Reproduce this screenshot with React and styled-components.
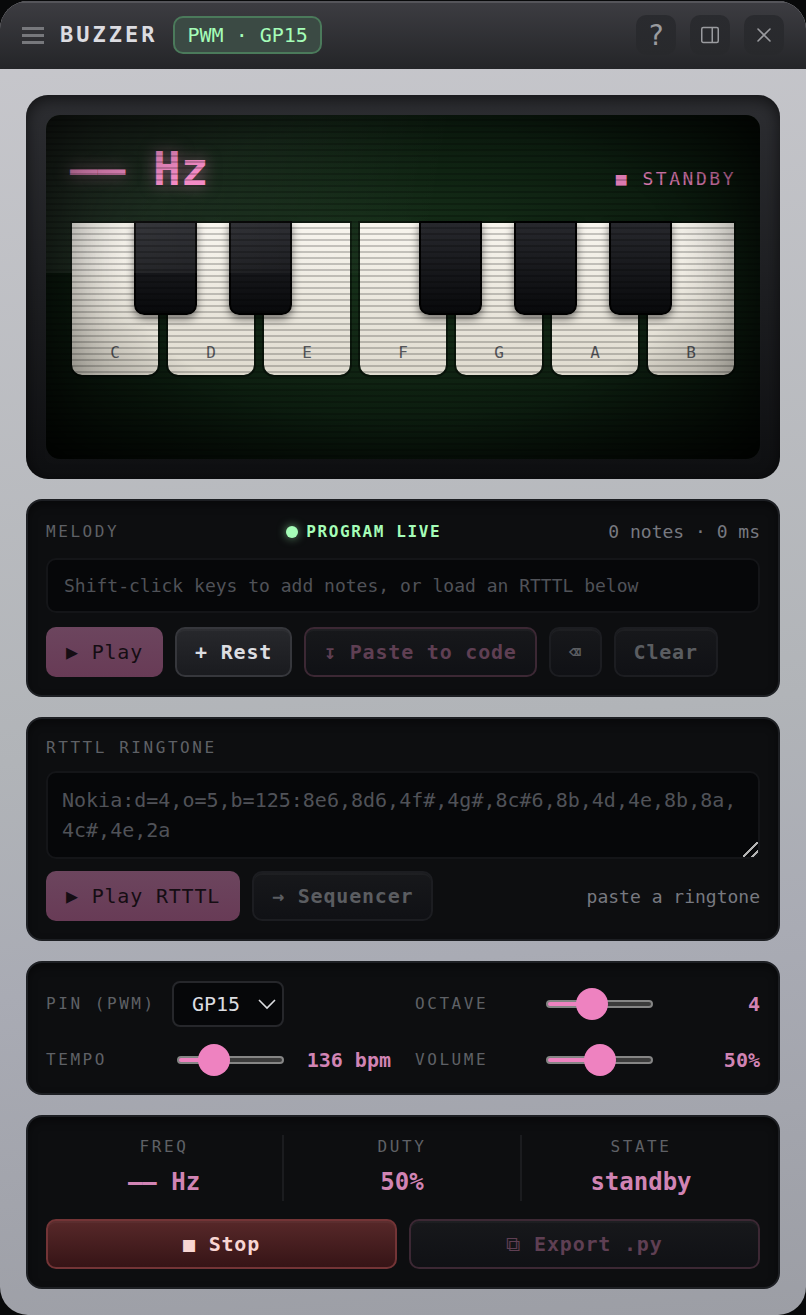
import { useState } from "react";
import styled, { createGlobalStyle, css } from "styled-components";

const mono = `"DejaVu Sans Mono", "Liberation Mono", monospace`;

const GlobalStyle = createGlobalStyle`
  * {
    box-sizing: border-box;
  }

  body {
    margin: 0;
    font-family: ${mono};
  }

  button,
  select,
  textarea,
  input {
    font-family: inherit;
    margin: 0;
  }
`;

const Page = styled.div`
  padding-top: 1px;
  background: #08090a;
`;

const Window = styled.div`
  border-radius: 28px;
  overflow: hidden;
  background: linear-gradient(175deg, #c8c8cd, #b1b4b8 55%, #a9abb4 72%, #9c9ea5);
`;

const Header = styled.header`
  display: flex;
  align-items: center;
  gap: 16px;
  padding: 14px 22px;
  background: linear-gradient(#3d3d42, #242528);
  box-shadow: inset 0 2px 0 #55555a;
`;

const MenuIcon = styled.span`
  display: flex;
  flex-direction: column;
  gap: 4px;
  width: 22px;

  i {
    height: 3px;
    background: #77787c;
  }
`;

const Title = styled.h1`
  margin: 0;
  font-size: 22px;
  line-height: 30px;
  letter-spacing: 3px;
  color: #dcdce1;
`;

const Chip = styled.span`
  padding: 0 12px;
  border: 2px solid #4b7a5b;
  border-radius: 10px;
  background: #3b4a44;
  font-size: 20px;
  line-height: 34px;
  color: #a5fdb8;
`;

const HeaderActions = styled.div`
  display: flex;
  gap: 14px;
  margin-left: auto;
`;

const IconButton = styled.button`
  display: grid;
  place-items: center;
  width: 40px;
  height: 40px;
  padding: 0;
  border: 0;
  border-radius: 10px;
  background: linear-gradient(#2a2b2f, #28292c);
  font-size: 28px;
  color: #9a9b9f;
`;

const Body = styled.main`
  display: flex;
  flex-direction: column;
  gap: 20px;
  padding: 26px;
`;

const Bezel = styled.section`
  padding: 20px;
  border-radius: 22px;
  background: linear-gradient(#2d2e32, #0e0f11);
  box-shadow: inset 0 4px 16px rgba(0, 0, 0, 0.6);
`;

const Screen = styled.div`
  position: relative;
  min-height: 344px;
  padding: 24px;
  border-radius: 14px;
  overflow: hidden;
  background: radial-gradient(ellipse at 50% 45%, #17321a, #0c1c0f 60%, #050a05);

  &::before {
    content: "";
    position: absolute;
    inset: 0 40% 54% 0;
    z-index: 2;
    background: linear-gradient(100deg, rgba(255, 255, 255, 0.09), transparent 90%);
    pointer-events: none;
  }

  &::after {
    content: "";
    position: absolute;
    inset: 0;
    z-index: 2;
    border-radius: 14px;
    background:
      repeating-linear-gradient(transparent 0 4px, rgba(0, 0, 0, 0.2) 4px 6px),
      radial-gradient(ellipse at 50% 45%, transparent 55%, rgba(0, 0, 0, 0.55));
    box-shadow: inset 0 0 60px rgba(0, 0, 0, 0.6);
    pointer-events: none;
  }
`;

const Readout = styled.div`
  display: flex;
  align-items: baseline;
  justify-content: space-between;
  margin-bottom: 22px;
  color: #f486c4;
`;

const Frequency = styled.span`
  font-size: 46px;
  font-weight: 700;
  line-height: 60px;
  text-shadow: 0 0 16px rgba(244, 134, 196, 0.5);
`;

const ScreenState = styled.span`
  font-size: 18px;
  letter-spacing: 0.14em;
  opacity: 0.9;
`;

const Keyboard = styled.div`
  position: relative;
  display: grid;
  grid-template-columns: repeat(7, 1fr);
  gap: 6px;
`;

const WhiteKey = styled.button`
  display: flex;
  align-items: flex-end;
  justify-content: center;
  height: 156px;
  padding: 0 0 10px;
  border: 2px solid rgba(0, 0, 0, 0.4);
  border-radius: 0 0 12px 12px;
  background: linear-gradient(#f8f5ee, #dfdbcf) padding-box;
  font-size: 16px;
  line-height: 24px;
  color: #55575c;
`;

const BlackKey = styled.button`
  position: absolute;
  top: 0;
  left: calc(100% / 7 * ${(props) => props.$after} - 9.5% / 2);
  z-index: 1;
  width: 9.5%;
  height: 60%;
  padding: 0;
  border: 2px solid #000;
  border-radius: 0 0 10px 10px;
  background: linear-gradient(#27282d, #08090b);
  box-shadow: 0 4px 8px rgba(0, 0, 0, 0.5);
`;

const Panel = styled.section`
  display: flex;
  flex-direction: column;
  gap: ${(props) => props.$gap || 12}px;
  padding: 18px;
  border: 2px solid #1d1f23;
  border-radius: 16px;
  background: #0d0e10;
  box-shadow: inset 0 4px 8px rgba(0, 0, 0, 0.4);
`;

const PanelHead = styled.div`
  display: flex;
  align-items: center;
  justify-content: space-between;
  line-height: 25px;
`;

const labelText = css`
  margin: 0;
  font-size: 16px;
  font-weight: 400;
  line-height: 22px;
  letter-spacing: 0.16em;
  color: #5f6166;
`;

const PanelTitle = styled.h2`
  ${labelText}
`;

const Label = styled.label`
  ${labelText}
`;

const Live = styled.span`
  display: flex;
  align-items: center;
  gap: 8px;
  font-size: 16px;
  font-weight: 700;
  letter-spacing: 0.1em;
  color: #a5fdb8;

  &::before {
    content: "";
    width: 12px;
    height: 12px;
    border-radius: 50%;
    background: currentColor;
    box-shadow: 0 0 10px rgba(165, 253, 184, 0.6);
  }
`;

const Meta = styled.span`
  margin-left: ${(props) => (props.$push ? "auto" : "0")};
  font-size: 18px;
  color: #777980;
`;

const Lane = styled.div`
  padding: 12px 16px;
  border: 2px solid #141518;
  border-radius: 10px;
  background: #060709;
  font-size: 18px;
  line-height: 27px;
  color: #505258;
`;

const ButtonRow = styled.div`
  display: flex;
  flex-wrap: wrap;
  align-items: center;
  gap: 12px;
`;

const looks = {
  plain: css`
    border-color: #36373c;
    background: linear-gradient(#27282c, #1a1b1f);
    color: #dcdde1;
  `,
  muted: css`
    border-color: #1c1d21;
    background: linear-gradient(#17181b, #101115);
    color: #5b5d61;
  `,
  primary: css`
    border-color: transparent;
    background: linear-gradient(#6c455e, #683b56) border-box;
    box-shadow: none;
    color: #150d13;
    font-weight: 400;
  `,
  outline: css`
    border-color: #3c2834;
    background: linear-gradient(#17181b, #101115);
    color: #5f3f53;
  `,
  danger: css`
    border-color: #733436;
    background: linear-gradient(#572829, #361416);
    color: #f8d6d3;
  `,
};

const Button = styled.button`
  display: flex;
  align-items: center;
  justify-content: center;
  height: 50px;
  padding: 0 18px;
  border: 2px solid;
  border-radius: 10px;
  box-shadow: inset 0 2px 0 rgba(255, 255, 255, 0.03);
  font-size: 20px;
  font-weight: 700;
  letter-spacing: 0.04em;
  white-space: pre;
  flex: ${(props) => (props.$grow ? "1 1 0" : "none")};
  ${(props) => looks[props.$look]}
`;

const Glyph = styled.span`
  font-weight: 400;
`;

const Ringtone = styled.textarea`
  display: block;
  width: 100%;
  height: 88px;
  padding: 12px 14px;
  border: 2px solid #141518;
  border-radius: 10px;
  background: #060709;
  font-size: 20px;
  line-height: 30px;
  color: #dcdde1;
  resize: vertical;

  &::placeholder {
    color: #505258;
  }

  &::-webkit-resizer {
    background: linear-gradient(
      135deg,
      transparent 46%,
      #b4b4b4 46% 54%,
      transparent 54% 76%,
      #b4b4b4 76% 84%,
      transparent 84%
    );
  }
`;

const Settings = styled.div`
  display: grid;
  grid-template-columns: 1fr 1fr;
  gap: 18px 24px;
`;

const Field = styled.div`
  display: grid;
  grid-template-columns: 114px minmax(0, 1fr) 95px;
  align-items: center;
  gap: 12px;
  min-height: 30px;
`;

const SelectBox = styled.div`
  display: grid;
  align-items: center;

  > * {
    grid-area: 1 / 1;
  }

  svg {
    justify-self: end;
    margin-right: 8px;
    pointer-events: none;
  }
`;

const Select = styled.select`
  appearance: none;
  height: 46px;
  padding: 0 16px 0 18px;
  border: 2px solid #26272b;
  border-radius: 8px;
  background: #060709;
  font-size: 20px;
  color: #dcdde1;
`;

const Range = styled.input`
  appearance: none;
  height: 30px;
  margin-left: 5px;
  background: none;

  &::-webkit-slider-runnable-track {
    height: 8px;
    border: 2px solid #858585;
    border-radius: 4px;
    background: linear-gradient(
      90deg,
      #ee82c0 ${(props) => props.$fill}%,
      #3b3b3b ${(props) => props.$fill}%
    );
  }

  &::-webkit-slider-thumb {
    appearance: none;
    width: 32px;
    height: 32px;
    margin-top: -14px;
    border-radius: 50%;
    background: #ee82c0;
  }
`;

const Value = styled.output`
  font-size: ${(props) => (props.$large ? 24 : 20)}px;
  font-weight: 700;
  line-height: ${(props) => (props.$large ? 32 : 30)}px;
  text-align: ${(props) => (props.$large ? "center" : "right")};
  white-space: nowrap;
  color: #d184b4;
`;

const Stats = styled.div`
  display: grid;
  grid-template-columns: repeat(3, 1fr);
  margin-bottom: 6px;
`;

const Stat = styled.div`
  display: flex;
  flex-direction: column;
  align-items: center;
  gap: 8px;
  padding: 1px 0 3px;

  &:not(:last-child) {
    border-right: 2px solid #1b1c1f;
  }
`;

const whiteKeys = ["C", "D", "E", "F", "G", "A", "B"];
const blackKeys = [
  { name: "C sharp", after: 1 },
  { name: "D sharp", after: 2 },
  { name: "F sharp", after: 4 },
  { name: "G sharp", after: 5 },
  { name: "A sharp", after: 6 },
];

const SliderField = ({ id, label, min, max, value, unit = "", onChange }) => (
  <Field>
    <Label htmlFor={id}>{label}</Label>
    <Range
      id={id}
      type="range"
      min={min}
      max={max}
      value={value}
      $fill={((value - min) / (max - min)) * 100}
      onChange={(e) => onChange(Number(e.target.value))}
    />
    <Value htmlFor={id}>
      {value}
      {unit}
    </Value>
  </Field>
);

const App = () => {
  const [pin, setPin] = useState("GP15");
  const [tempo, setTempo] = useState(136);
  const [octave, setOctave] = useState(4);
  const [volume, setVolume] = useState(50);

  return (
    <Page>
      <GlobalStyle />
      <Window>
        <Header>
          <MenuIcon>
            <i />
            <i />
            <i />
          </MenuIcon>
          <Title>BUZZER</Title>
          <Chip>PWM · {pin}</Chip>
          <HeaderActions>
            <IconButton>?</IconButton>
            <IconButton aria-label="Dock">
              <svg width="20" height="20" fill="none" stroke="currentColor" strokeWidth="1.5">
                <rect x="1.75" y="2.5" width="16.5" height="15" rx="1.5" />
                <path d="M12.25 2.5v15" />
              </svg>
            </IconButton>
            <IconButton aria-label="Close">
              <svg width="20" height="20" fill="none" stroke="currentColor" strokeWidth="1.6">
                <path d="M4 4l12 12M16 4L4 16" strokeLinecap="round" />
              </svg>
            </IconButton>
          </HeaderActions>
        </Header>
        <Body>
          <Bezel>
            <Screen>
              <Readout>
                <Frequency>—— Hz</Frequency>
                <ScreenState>■ STANDBY</ScreenState>
              </Readout>
              <Keyboard>
                {whiteKeys.map((note) => (
                  <WhiteKey key={note}>{note}</WhiteKey>
                ))}
                {blackKeys.map(({ name, after }) => (
                  <BlackKey key={name} aria-label={name} $after={after} />
                ))}
              </Keyboard>
            </Screen>
          </Bezel>

          <Panel $gap={14}>
            <PanelHead>
              <PanelTitle>MELODY</PanelTitle>
              <Live>PROGRAM LIVE</Live>
              <Meta>0 notes · 0 ms</Meta>
            </PanelHead>
            <Lane>Shift-click keys to add notes, or load an RTTTL below</Lane>
            <ButtonRow>
              <Button $look="primary" disabled>▶ Play</Button>
              <Button $look="plain">+ Rest</Button>
              <Button $look="outline" disabled>↧ Paste to code</Button>
              <Button $look="muted" disabled>⌫</Button>
              <Button $look="muted" disabled>Clear</Button>
            </ButtonRow>
          </Panel>

          <Panel>
            <Label htmlFor="rtttl">RTTTL RINGTONE</Label>
            <Ringtone
              id="rtttl"
              placeholder="Nokia:d=4,o=5,b=125:8e6,8d6,4f#,4g#,8c#6,8b,4d,4e,8b,8a,4c#,4e,2a"
            />
            <ButtonRow>
              <Button $look="primary" disabled>▶ Play RTTTL</Button>
              <Button $look="muted" disabled>→ Sequencer</Button>
              <Meta $push>paste a ringtone</Meta>
            </ButtonRow>
          </Panel>

          <Panel>
            <Settings>
              <Field>
                <Label htmlFor="pin">PIN (PWM)</Label>
                <SelectBox>
                  <Select id="pin" value={pin} onChange={(e) => setPin(e.target.value)}>
                    <option>GP14</option>
                    <option>GP15</option>
                    <option>GP16</option>
                  </Select>
                  <svg width="18" height="12" fill="none" stroke="#dcdde1" strokeWidth="1.6">
                    <path d="M1 2l8 8 8-8" />
                  </svg>
                </SelectBox>
              </Field>
              <SliderField id="octave" label="OCTAVE" min={2} max={7} value={octave} onChange={setOctave} />
              <SliderField id="tempo" label="TEMPO" min={40} max={400} value={tempo} unit=" bpm" onChange={setTempo} />
              <SliderField id="volume" label="VOLUME" min={0} max={100} value={volume} unit="%" onChange={setVolume} />
            </Settings>
          </Panel>

          <Panel>
            <Stats>
              <Stat>
                <PanelTitle>FREQ</PanelTitle>
                <Value $large>—— Hz</Value>
              </Stat>
              <Stat>
                <PanelTitle>DUTY</PanelTitle>
                <Value $large>{volume}%</Value>
              </Stat>
              <Stat>
                <PanelTitle>STATE</PanelTitle>
                <Value $large>standby</Value>
              </Stat>
            </Stats>
            <ButtonRow>
              <Button $look="danger" $grow>■ Stop</Button>
              <Button $look="outline" $grow disabled>
                <Glyph>⧉</Glyph> Export .py
              </Button>
            </ButtonRow>
          </Panel>
        </Body>
      </Window>
    </Page>
  );
};

export default App;
